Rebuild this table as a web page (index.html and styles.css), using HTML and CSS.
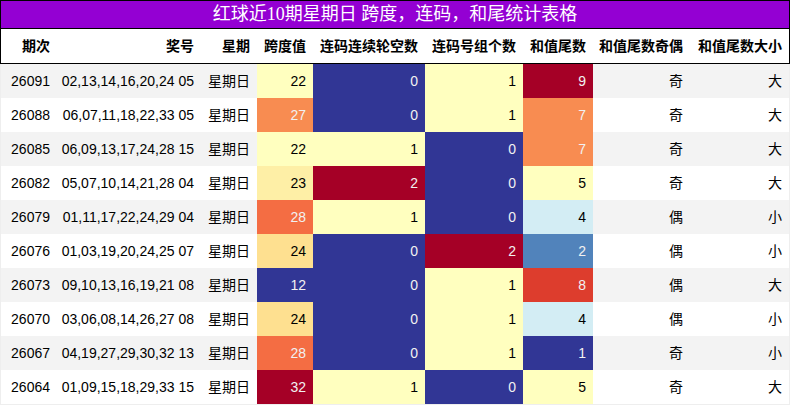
FILE: index.html
```html
<!DOCTYPE html>
<html lang="zh">
<head>
<meta charset="utf-8">
<title>红球近10期星期日统计</title>
<link rel="stylesheet" href="styles.css">
</head>
<body>
<div class="sheet">
  <div class="title">红球近10期星期日 跨度，连码，和尾统计表格</div>
  <div class="row head">
    <div class="c">期次</div><div class="c">奖号</div><div class="c">星期</div><div class="c">跨度值</div><div class="c">连码连续轮空数</div><div class="c">连码号组个数</div><div class="c">和值尾数</div><div class="c">和值尾数奇偶</div><div class="c">和值尾数大小</div>
  </div>
  <div class="row odd">
    <div class="c">26091</div><div class="c">02,13,14,16,20,24 05</div><div class="c">星期日</div><div class="c g-y">22</div><div class="c g-b">0</div><div class="c g-y">1</div><div class="c g-r">9</div><div class="c">奇</div><div class="c">大</div>
  </div>
  <div class="row">
    <div class="c">26088</div><div class="c">06,07,11,18,22,33 05</div><div class="c">星期日</div><div class="c g-o">27</div><div class="c g-b">0</div><div class="c g-y">1</div><div class="c g-o">7</div><div class="c">奇</div><div class="c">大</div>
  </div>
  <div class="row odd">
    <div class="c">26085</div><div class="c">06,09,13,17,24,28 15</div><div class="c">星期日</div><div class="c g-y">22</div><div class="c g-y">1</div><div class="c g-b">0</div><div class="c g-o">7</div><div class="c">奇</div><div class="c">大</div>
  </div>
  <div class="row">
    <div class="c">26082</div><div class="c">05,07,10,14,21,28 04</div><div class="c">星期日</div><div class="c g-y2">23</div><div class="c g-r">2</div><div class="c g-b">0</div><div class="c g-y">5</div><div class="c">奇</div><div class="c">大</div>
  </div>
  <div class="row odd">
    <div class="c">26079</div><div class="c">01,11,17,22,24,29 04</div><div class="c">星期日</div><div class="c g-o2">28</div><div class="c g-y">1</div><div class="c g-b">0</div><div class="c g-lb">4</div><div class="c">偶</div><div class="c">小</div>
  </div>
  <div class="row">
    <div class="c">26076</div><div class="c">01,03,19,20,24,25 07</div><div class="c">星期日</div><div class="c g-y3">24</div><div class="c g-b">0</div><div class="c g-r">2</div><div class="c g-mb">2</div><div class="c">偶</div><div class="c">小</div>
  </div>
  <div class="row odd">
    <div class="c">26073</div><div class="c">09,10,13,16,19,21 08</div><div class="c">星期日</div><div class="c g-b">12</div><div class="c g-b">0</div><div class="c g-y">1</div><div class="c g-rr">8</div><div class="c">偶</div><div class="c">大</div>
  </div>
  <div class="row">
    <div class="c">26070</div><div class="c">03,06,08,14,26,27 08</div><div class="c">星期日</div><div class="c g-y3">24</div><div class="c g-b">0</div><div class="c g-y">1</div><div class="c g-lb">4</div><div class="c">偶</div><div class="c">小</div>
  </div>
  <div class="row odd">
    <div class="c">26067</div><div class="c">04,19,27,29,30,32 13</div><div class="c">星期日</div><div class="c g-o2">28</div><div class="c g-b">0</div><div class="c g-y">1</div><div class="c g-b">1</div><div class="c">奇</div><div class="c">小</div>
  </div>
  <div class="row last">
    <div class="c">26064</div><div class="c">01,09,15,18,29,33 15</div><div class="c">星期日</div><div class="c g-r">32</div><div class="c g-y">1</div><div class="c g-b">0</div><div class="c g-y">5</div><div class="c">奇</div><div class="c">大</div>
  </div>
</div>
</body>
</html>
```
FILE: styles.css
```css
html, body {
  margin: 0;
  padding: 0;
  background: #ffffff;
}

.sheet {
  width: 790px;
  font-family: "Liberation Sans", "Noto Sans CJK SC", sans-serif;
  font-size: 14px;
  color: #000000;
}

.title {
  height: 27px;
  line-height: 27px;
  border: 1px solid #000000;
  background: #9400d3;
  color: #ffffff;
  text-align: center;
  font-family: "Liberation Serif", "Noto Sans CJK SC", serif;
  font-size: 18px;
}

.row {
  display: grid;
  grid-template-columns: 56px 144px 56px 56px 112px 98px 70px 97px 99px;
  height: 34px;
  border-left: 1px solid #eeeeee;
  border-right: 1px solid #eeeeee;
  background: #ffffff;
}

.row.odd {
  background: #f3f3f3;
}

.row.last {
  border-bottom: 1px solid #eeeeee;
}

.row.head {
  height: 34px;
  border-left: 1px solid #000000;
  border-right: 1px solid #000000;
  border-bottom: 1px solid #000000;
  font-weight: bold;
}

.c {
  line-height: 34px;
  padding-right: 7px;
  text-align: right;
  white-space: nowrap;
  overflow: hidden;
}

.g-b  { background: #313695; color: #f1f1f1; }
.g-mb { background: #5183bb; color: #f1f1f1; }
.g-lb { background: #d3edf4; color: #000000; }
.g-y  { background: #ffffbf; color: #000000; }
.g-y2 { background: #feefa6; color: #000000; }
.g-y3 { background: #fee090; color: #000000; }
.g-o  { background: #f88c51; color: #f1f1f1; }
.g-o2 { background: #f46d43; color: #f1f1f1; }
.g-rr { background: #dd3d2d; color: #f1f1f1; }
.g-r  { background: #a50026; color: #f1f1f1; }
```
